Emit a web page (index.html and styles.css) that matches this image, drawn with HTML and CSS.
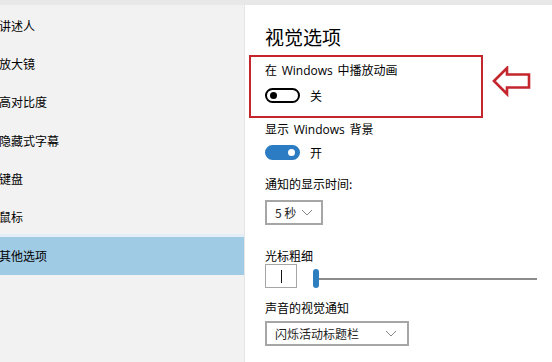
FILE: index.html
```html
<!DOCTYPE html>
<html lang="zh-CN">
<head>
  <meta charset="UTF-8">
  <meta name="viewport" content="width=device-width, initial-scale=1.0">
  <title>轻松使用 - 其他选项</title>
  <link rel="stylesheet" href="styles.css">
</head>
<body>
  <div class="top-band"></div>
  <div class="window">
    <nav class="sidebar">
      <div class="nav-item">讲述人</div>
      <div class="nav-item">放大镜</div>
      <div class="nav-item">高对比度</div>
      <div class="nav-item">隐藏式字幕</div>
      <div class="nav-item">键盘</div>
      <div class="nav-item">鼠标</div>
      <div class="nav-item active">其他选项</div>
    </nav>

    <main class="content">
      <h1>视觉选项</h1>

      <div class="highlight-row">
        <div class="highlight-box">
          <div class="label">在 <span class="latin">Windows</span> 中播放动画</div>
          <div class="toggle-row">
            <span class="toggle"><span class="knob"></span></span>
            <span class="state">关</span>
          </div>
        </div>
        <svg class="arrow" width="40" height="32" viewBox="0 0 40 32">
          <path d="M2 15 L15 2 L15 8.5 L37 8.5 L37 21.5 L15 21.5 L15 28 Z" fill="none" stroke="#c4262e" stroke-width="2.6" stroke-linejoin="miter"/>
        </svg>
      </div>

      <div class="label gap-s">显示 <span class="latin">Windows</span> 背景</div>
      <div class="toggle-row gap-toggle">
        <span class="toggle on"><span class="knob"></span></span>
        <span class="state">开</span>
      </div>

      <div class="label gap-l">通知的显示时间:</div>
      <div class="select small">
        <span>5 秒</span>
        <svg class="chev" width="12" height="7" viewBox="0 0 12 7"><path d="M1 1 L6 6 L11 1" fill="none" stroke="#888" stroke-width="1"/></svg>
      </div>

      <div class="label gap-xl">光标粗细</div>
      <div class="cursor-row">
        <div class="cursor-box"><span class="caret"></span></div>
        <div class="slider">
          <span class="thumb"></span>
          <span class="track"></span>
        </div>
      </div>

      <div class="label gap-m">声音的视觉通知</div>
      <div class="select wide">
        <span>闪烁活动标题栏</span>
        <svg class="chev" width="12" height="7" viewBox="0 0 12 7"><path d="M1 1 L6 6 L11 1" fill="none" stroke="#888" stroke-width="1"/></svg>
      </div>
    </main>
  </div>
</body>
</html>
```

FILE: styles.css
```css
html, body {
  margin: 0;
  padding: 0;
}
body {
  width: 552px;
  height: 362px;
  overflow: hidden;
  background-color: #fff;
  color: #000;
  font-family: "Noto Sans CJK SC", "Noto Sans", sans-serif;
  font-size: 12px;
}
.top-band {
  height: 5px;
  background-color: #e8e8e8;
}
.window {
  display: flex;
  height: 357px;
}
.sidebar {
  width: 244px;
  flex-shrink: 0;
  background-color: #f2f2f2;
  border-right: 1px solid #e6e6e6;
  padding-top: 1.8px;
}
.nav-item {
  height: 38.3px;
  line-height: 38.3px;
  font-size: 12px;
  margin-left: -1px;
  white-space: nowrap;
}
.nav-item.active {
  background-color: #a0cbe4;
  box-shadow: 0 -3px 0 #e4eef6;
}
.content {
  flex: 1;
  padding: 20px 0 0 20px;
}
h1 {
  margin: 0;
  font-size: 19px;
  font-weight: normal;
  line-height: 24px;
}
.label {
  line-height: 16px;
  white-space: nowrap;
  word-spacing: 2px;
}
.latin {
  font-family: "Open Sans", "Noto Sans", sans-serif;
}
.highlight-row {
  display: flex;
  align-items: flex-start;
  margin: 6px 0 0 -16px;
}
.highlight-box {
  width: 216px;
  border: 2px solid #c4262e;
  padding: 5px 0 13px 14px;
}
.arrow {
  margin: 11px 0 0 9px;
}
.toggle-row {
  display: flex;
  align-items: center;
  margin-top: 9px;
  height: 15px;
}
.toggle {
  box-sizing: border-box;
  width: 35px;
  height: 15px;
  border: 2px solid #000;
  border-radius: 8px;
  display: flex;
  align-items: center;
  padding: 0 3px;
}
.toggle .knob {
  width: 7px;
  height: 7px;
  border-radius: 50%;
  background-color: #000;
}
.toggle.on {
  background-color: #2b7cc3;
  border-color: #2b7cc3;
  justify-content: flex-end;
}
.toggle.on .knob {
  background-color: #fff;
}
.state {
  margin-left: 10px;
}
.gap-s {
  margin-top: 3px;
}
.gap-toggle {
  margin-top: 7px;
}
.gap-l {
  margin-top: 16px;
}
.gap-xl {
  margin-top: 23px;
}
.gap-m {
  margin-top: 12px;
}
.select {
  box-sizing: border-box;
  height: 25px;
  border: 2px solid #a6a6a6;
  display: flex;
  align-items: center;
  justify-content: space-between;
  padding: 0 8px 0 8px;
  margin-top: 8px;
  color: #222;
}
.select.small {
  width: 58px;
}
.select.wide {
  width: 144px;
  margin-top: 5px;
  padding-right: 10px;
}
.cursor-row {
  display: flex;
  align-items: center;
  height: 24px;
}
.cursor-box {
  box-sizing: border-box;
  width: 32px;
  height: 24px;
  border: 1px solid #a6a6a6;
  display: flex;
  align-items: center;
  justify-content: center;
}
.caret {
  width: 1px;
  height: 13px;
  background-color: #111;
}
.slider {
  flex: 1;
  display: flex;
  align-items: center;
  margin-left: 16px;
  margin-right: 15px;
  padding-top: 4px;
}
.thumb {
  width: 6px;
  height: 19px;
  border-radius: 3px;
  background-color: #2e7fc0;
  flex-shrink: 0;
}
.track {
  flex: 1;
  height: 2px;
  background-color: #8c8c8c;
  margin-top: 2px;
}
```
